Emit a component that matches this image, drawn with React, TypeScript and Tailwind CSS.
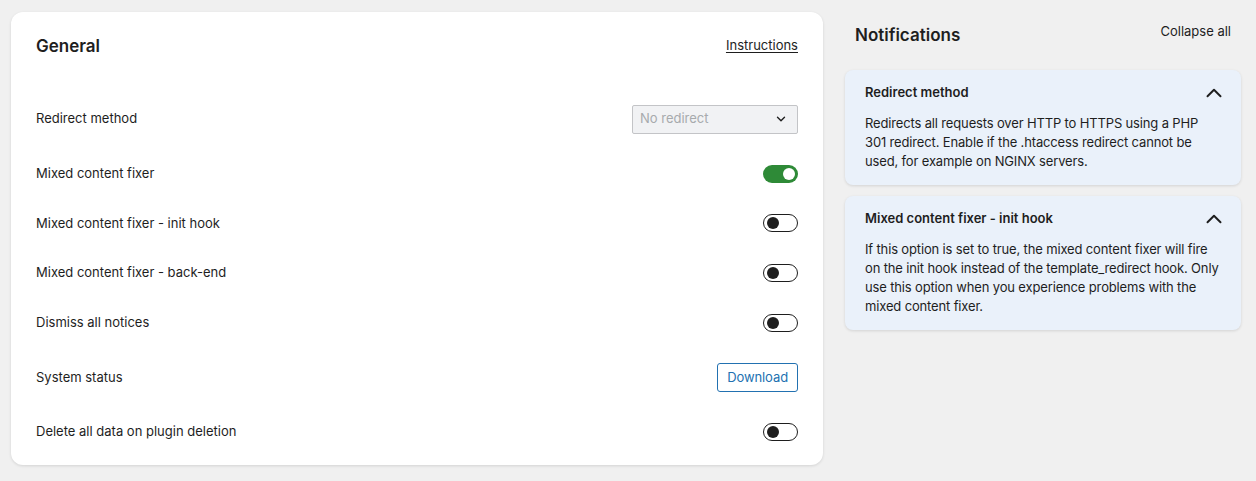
import { ChevronDown, ChevronUp } from "lucide-react";

type Row =
  | { label: string; kind: "select"; value: string }
  | { label: string; kind: "toggle"; on: boolean }
  | { label: string; kind: "button"; text: string };

const rows: Row[] = [
  { label: "Redirect method", kind: "select", value: "No redirect" },
  { label: "Mixed content fixer", kind: "toggle", on: true },
  { label: "Mixed content fixer - init hook", kind: "toggle", on: false },
  { label: "Mixed content fixer - back-end", kind: "toggle", on: false },
  { label: "Dismiss all notices", kind: "toggle", on: false },
  { label: "System status", kind: "button", text: "Download" },
  { label: "Delete all data on plugin deletion", kind: "toggle", on: false },
];

const notices = [
  {
    title: "Redirect method",
    body: "Redirects all requests over HTTP to HTTPS using a PHP 301 redirect. Enable if the .htaccess redirect cannot be used, for example on NGINX servers.",
  },
  {
    title: "Mixed content fixer - init hook",
    body: "If this option is set to true, the mixed content fixer will fire on the init hook instead of the template_redirect hook. Only use this option when you experience problems with the mixed content fixer.",
  },
];

function Toggle({ on }: { on: boolean }) {
  if (on) {
    return (
      <span className="relative inline-flex h-[18px] w-[35px] items-center rounded-full bg-[#2e8a37]">
        <span className="absolute right-[3px] h-[12px] w-[12px] rounded-full bg-white" />
      </span>
    );
  }
  return (
    <span className="relative inline-flex h-[18px] w-[35px] items-center rounded-full border border-[#1e1e1e] bg-white">
      <span className="absolute left-[3px] h-[12px] w-[12px] rounded-full bg-[#1e1e1e]" />
    </span>
  );
}

function Control({ row }: { row: Row }) {
  if (row.kind === "select") {
    return (
      <div className="flex h-[29px] w-[166px] items-center justify-between rounded-[2px] border border-[#c3c4c7] bg-[#f1f2f4] pl-[7px] pr-[9px] text-[13px] text-[#a7aaad]">
        <span>{row.value}</span>
        <ChevronDown className="h-[14px] w-[14px] text-[#1e1e1e]" strokeWidth={2.4} />
      </div>
    );
  }
  if (row.kind === "button") {
    return (
      <button
        type="button"
        className="h-[29px] rounded-[3px] border border-[#2271b1] bg-white px-[9px] text-[13px] tracking-[-0.1px] text-[#2271b1]"
      >
        {row.text}
      </button>
    );
  }
  return <Toggle on={row.on} />;
}

export default function App() {
  return (
    <div
      className="flex min-h-[481px] w-[1256px] items-start gap-[21px] bg-[#f0f0f0] pl-[11px] pt-[12px] text-[#1e1e1e]"
      style={{ fontFamily: "Inter, 'Noto Sans', sans-serif" }}
    >
      {/* settings card */}
      <div className="w-[812px] rounded-[12px] bg-white px-[25px] pb-[8px] shadow-[0_1px_3px_rgba(0,0,0,0.12)]">
        <div className="flex h-[68px] items-center justify-between">
          <h2 className="mt-[1px] text-[17px] font-semibold">General</h2>
          <a className="text-[13px] underline underline-offset-2">Instructions</a>
        </div>
        <div className="pt-[9px]">
          {rows.map((row) => (
            <div
              key={row.label}
              className={`flex items-center justify-between text-[13px] ${
                row.kind === "toggle" ? "h-[49.6px]" : "h-[60px]"
              }`}
            >
              <span>{row.label}</span>
              <Control row={row} />
            </div>
          ))}
        </div>
      </div>

      {/* notifications */}
      <div className="w-[397px] pl-[1px]">
        <div className="flex h-[58px] items-start justify-between px-[10px]">
          <h2 className="mt-[11px] text-[17px] font-semibold">Notifications</h2>
          <span className="mt-[10px] text-[13px]">Collapse all</span>
        </div>
        <div className="flex flex-col gap-[11px]">
          {notices.map((n) => (
            <div
              key={n.title}
              className="rounded-[8px] bg-[#eaf1fa] px-[20px] pb-[14px] pt-[14px] shadow-[0_1px_3px_rgba(0,0,0,0.12)]"
            >
              <div className="flex h-[18px] items-center justify-between">
                <span className="text-[13px] font-semibold">{n.title}</span>
                <ChevronUp className="-mr-[6px] h-[26px] w-[26px]" strokeWidth={1.8} />
              </div>
              <p className="mt-[12px] text-[13px] leading-[19px] tracking-[-0.15px]">{n.body}</p>
            </div>
          ))}
        </div>
      </div>
    </div>
  );
}
